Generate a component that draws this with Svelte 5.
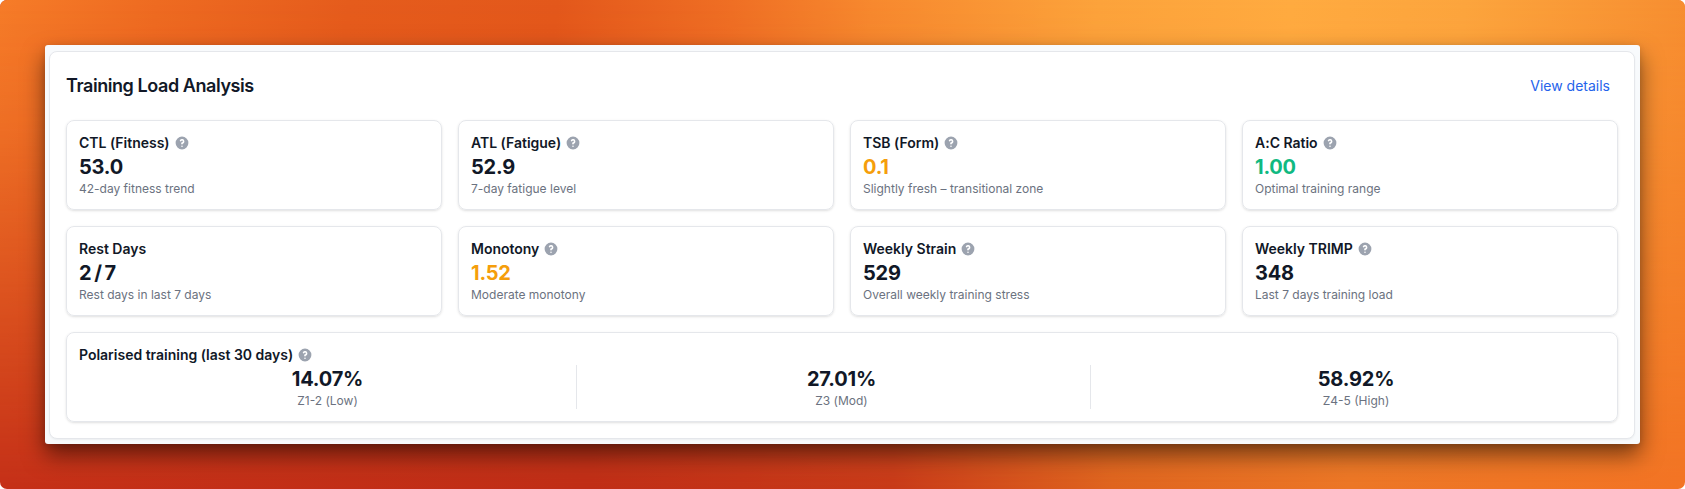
<script>
  const metrics = [
    { label: 'CTL (Fitness)', value: '53.0', note: '42-day fitness trend', help: true },
    { label: 'ATL (Fatigue)', value: '52.9', note: '7-day fatigue level', help: true },
    { label: 'TSB (Form)', value: '0.1', note: 'Slightly fresh – transitional zone', help: true, tone: 'amber' },
    { label: 'A:C Ratio', value: '1.00', note: 'Optimal training range', help: true, tone: 'green' },
    { label: 'Rest Days', value: '2 / 7', note: 'Rest days in last 7 days', help: false },
    { label: 'Monotony', value: '1.52', note: 'Moderate monotony', help: true, tone: 'amber' },
    { label: 'Weekly Strain', value: '529', note: 'Overall weekly training stress', help: true },
    { label: 'Weekly TRIMP', value: '348', note: 'Last 7 days training load', help: true }
  ];
  const zones = [
    { value: '14.07%', note: 'Z1-2 (Low)' },
    { value: '27.01%', note: 'Z3 (Mod)' },
    { value: '58.92%', note: 'Z4-5 (High)' }
  ];
</script>

{#snippet helpIcon()}
  <svg class="help" viewBox="0 0 20 20" aria-hidden="true">
    <path fill="currentColor" fill-rule="evenodd" clip-rule="evenodd" d="M18 10a8 8 0 11-16 0 8 8 0 0116 0zm-8-3a1 1 0 00-.867.5 1 1 0 11-1.731-1A3 3 0 0113 8a3.001 3.001 0 01-2 2.83V11a1 1 0 11-2 0v-1a1 1 0 011-1 1 1 0 100-2zm0 8a1 1 0 100-2 1 1 0 000 2z" />
  </svg>
{/snippet}

<div class="backdrop">
  <div class="window">
    <section class="panel">
      <header>
        <h2>Training Load Analysis</h2>
        <button type="button">View details</button>
      </header>
      <div class="grid">
        {#each metrics as m}
          <article class="card">
            <div class="label"><span>{m.label}</span>{#if m.help}{@render helpIcon()}{/if}</div>
            <div class="value {m.tone ?? ''}">{m.value}</div>
            <div class="note">{m.note}</div>
          </article>
        {/each}
        <article class="card wide">
          <div class="label"><span>Polarised training (last 30 days)</span>{@render helpIcon()}</div>
          <div class="zones">
            {#each zones as z}
              <div class="zone">
                <div class="value">{z.value}</div>
                <div class="note">{z.note}</div>
              </div>
            {/each}
          </div>
        </article>
      </div>
    </section>
  </div>
</div>

<style>
  :global(body) { margin: 0; background: #fff; }
  .backdrop {
    box-sizing: border-box;
    width: 1685px;
    height: 489px;
    padding: 45px;
    border-radius: 7px;
    overflow: hidden;
    position: relative;
    isolation: isolate;
    font-family: Inter, sans-serif;
    color: #111827;
    background: linear-gradient(90deg, #c53018 0%, #c02e17 35%, #c83a19 53%, #df641f 66%, #ec7626 80%, #f37424 100%);
  }
  .backdrop::before {
    content: '';
    position: absolute;
    inset: 0;
    z-index: -1;
    background: linear-gradient(97deg, #f67c28 0%, #ee6b21 9%, #e55c1c 20%, #e3581b 32%, #ef6f24 42%, #f7892e 50%, #fca33b 63%, #ffab40 74%, #fca53d 84%, #f5882d 100%);
    mask-image: linear-gradient(180deg, #000 0%, rgba(0, 0, 0, 0.85) 25%, rgba(0, 0, 0, 0.55) 55%, transparent 100%);
  }
  .window {
    box-sizing: border-box;
    width: 1595px;
    height: 399px;
    padding: 6px 5px 5px 4px;
    border-radius: 3px;
    background: #f8fafc;
    box-shadow: 0 11px 22px rgba(0, 0, 0, 0.5), 0 2px 6px rgba(0, 0, 0, 0.12);
  }
  .panel {
    box-sizing: border-box;
    height: 388px;
    padding: 16px;
    border: 1px solid #e5e7eb;
    border-radius: 8px;
    background: #fff;
    box-shadow: 0 1px 2px rgba(0, 0, 0, 0.05);
  }
  header {
    display: flex;
    align-items: center;
    justify-content: space-between;
    height: 36px;
    margin-bottom: 16px;
  }
  h2 { margin: 0; font-size: 18px; line-height: 28px; font-weight: 600; letter-spacing: -0.43px; }
  button {
    padding: 8px;
    border: 0;
    background: none;
    font: 400 14px/20px Inter, sans-serif;
    color: #2563eb;
  }
  .grid { display: grid; grid-template-columns: repeat(4, 1fr); gap: 16px; }
  .card {
    box-sizing: border-box;
    height: 90px;
    padding: 12px;
    border: 1px solid #e5e7eb;
    border-radius: 8px;
    box-shadow: 0 1px 3px rgba(0, 0, 0, 0.1), 0 1px 2px -1px rgba(0, 0, 0, 0.1);
  }
  .wide { grid-column: 1 / -1; }
  .label { display: flex; align-items: center; gap: 4px; font-size: 14px; line-height: 20px; font-weight: 600; letter-spacing: -0.01px; }
  .help { width: 16px; height: 16px; color: #9ca3af; }
  .value { font-size: 20px; line-height: 28px; font-weight: 700; letter-spacing: -0.2px; word-spacing: -1.8px; }
  .amber { color: #f59e0b; }
  .green { color: #10b981; }
  .note { font-size: 12px; line-height: 16px; color: #6b7280; }
  .zones { display: grid; grid-template-columns: repeat(3, 1fr); gap: 16px; text-align: center; }
  .zone:not(:last-child) { border-right: 1px solid #e5e7eb; }
</style>
